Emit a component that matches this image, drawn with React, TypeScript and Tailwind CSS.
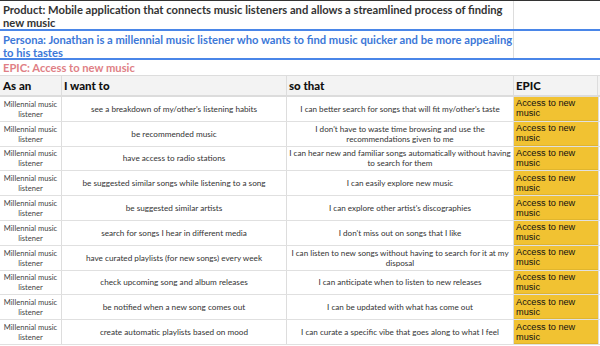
const rows = [
  ["see a breakdown of my/other's listening habits", "I can better search for songs that will fit my/other's taste"],
  ["be recommended music", "I don't have to waste time browsing and use the recommendations given to me"],
  ["have access to radio stations", "I can hear new and familiar songs automatically without having to search for them"],
  ["be suggested similar songs while listening to a song", "I can easily explore new music"],
  ["be suggested similar artists", "I can explore other artist's discographies"],
  ["search for songs I hear in different media", "I don't miss out on songs that I like"],
  ["have curated playlists (for new songs) every week", "I can listen to new songs without having to search for it at my disposal"],
  ["check upcoming song and album releases", "I can anticipate when to listen to new releases"],
  ["be notified when a new song comes out", "I can be updated with what has come out"],
  ["create automatic playlists based on mood", "I can curate a specific vibe that goes along to what I feel"],
];

export default function App() {
  return (
    <div className="w-[600px] h-[346px] overflow-hidden bg-white font-['Lato','Liberation_Sans',sans-serif] text-[#222]">
      <div className="h-[1px] bg-[#333]" />
      {/* product */}
      <div className="flex h-[30px] border-b-2 border-[#4a86e8]">
        <div className="w-[514px] border-r border-[#ddd] pl-[3px] pt-[2px] text-[11.2px] font-bold leading-[13px] text-[#333]">
          Product: Mobile application that connects music listeners and allows a streamlined process of finding new music
        </div>
        <div className="flex-1" />
      </div>
      {/* persona */}
      <div className="flex h-[29px] border-b-2 border-[#4a86e8]">
        <div className="w-[514px] border-r border-[#ddd] pl-[3px] pt-[2px] text-[11.2px] font-bold leading-[13px] text-[#3c78d8]">
          Persona: Jonathan is a millennial music listener who wants to find music quicker and be more appealing to his tastes
        </div>
        <div className="flex-1" />
      </div>
      {/* epic */}
      <div className="h-[16px] border-b border-[#ddd] pl-[3px] text-[11.2px] font-bold leading-[15px] text-[#e07f86]">
        EPIC: Access to new music
      </div>
      {/* header */}
      <div className="flex h-[21px] items-center border-b-2 border-[#dcdcdc] bg-[#f3f3f3] text-[11.5px] font-black text-[#111]">
        <div className="flex h-full w-[62px] items-center border-r border-[#ddd] pl-[3px]">As an</div>
        <div className="flex h-full w-[225px] items-center border-r border-[#ddd] pl-[2px]">I want to</div>
        <div className="flex h-full w-[227px] items-center border-r border-[#ddd] pl-[2px]">so that</div>
        <div className="flex h-full w-[84px] items-center border-r border-[#ddd] pl-[2px]">EPIC</div>
        <div className="flex-1" />
      </div>
      {rows.map(([want, so], i) => (
        <div key={i} className="flex h-[24.8px] border-b border-[#e0e0e0]">
          <div className="flex w-[62px] items-center justify-center border-r border-[#ddd] text-center text-[7.6px] leading-[10px] text-[#444]">
            Millennial music<br />listener
          </div>
          <div className="flex w-[225px] items-center justify-center border-r border-[#ddd] px-[2px] text-center text-[8.2px] leading-[10px] text-[#333]">
            {want}
          </div>
          <div className="flex w-[227px] items-center justify-center border-r border-[#ddd] text-center text-[8.1px] leading-[10px] text-[#333]">
            {so}
          </div>
          <div className="flex w-[84px] items-center border-b border-[#e0b52e] bg-[#f1c232] pl-[2px] font-['Liberation_Sans',Arial,sans-serif] text-[9.2px] leading-[10px] text-[#111]">
            Access to new<br />music
          </div>
          <div className="flex-1 border-l border-[#ddd]" />
        </div>
      ))}
    </div>
  );
}
